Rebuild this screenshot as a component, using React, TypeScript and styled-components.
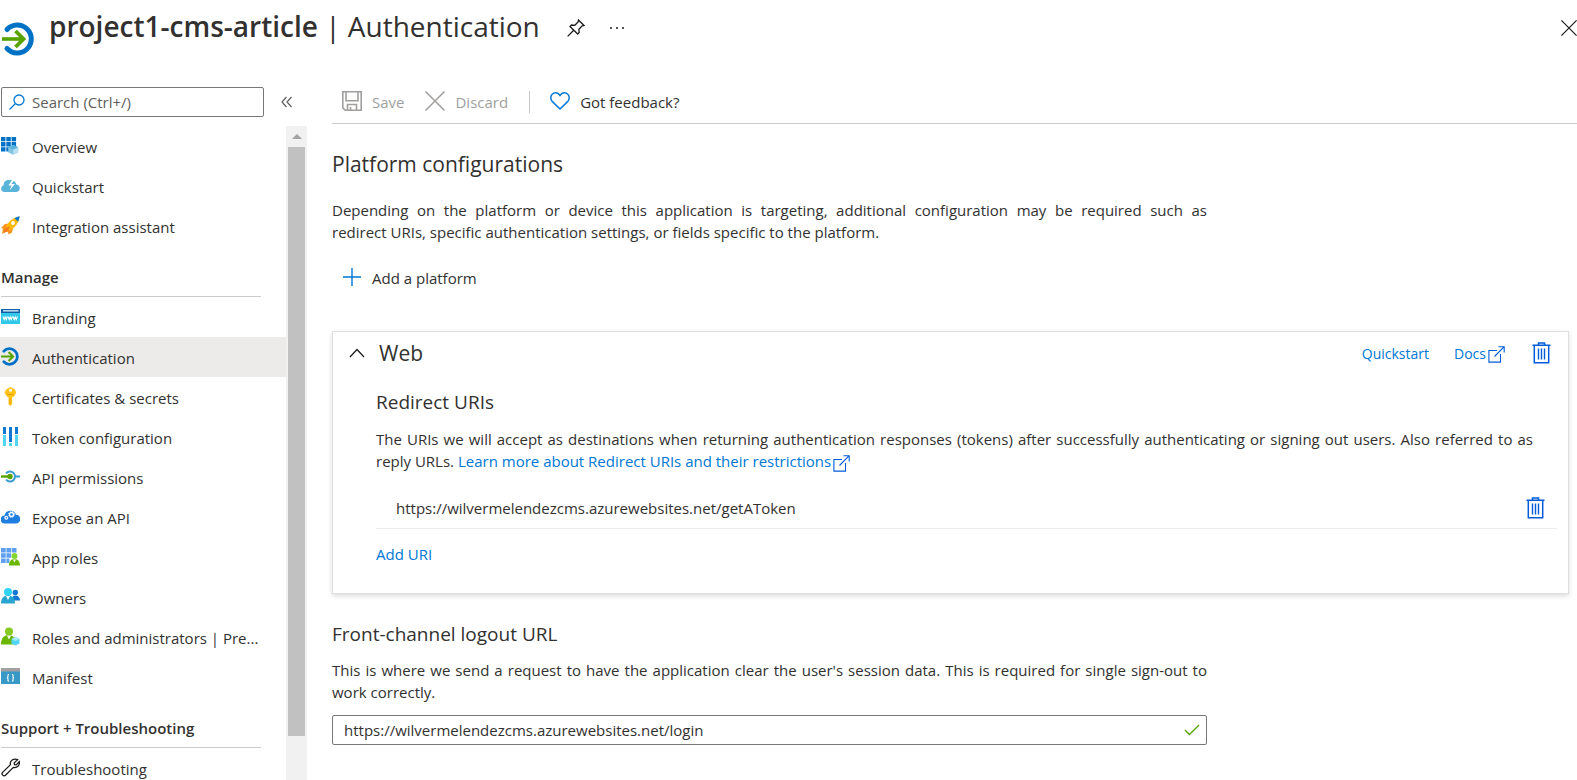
import React from "react";
import styled, { createGlobalStyle, css } from "styled-components";

const color = {
  text: "#323130",
  muted: "#605e5c",
  disabled: "#a19f9d",
  link: "#0078d4",
  trash: "#015cda",
  rule: "#cccccc",
};

const GlobalStyle = createGlobalStyle`
  *, *::before, *::after { box-sizing: border-box; }
  html, body, #root { height: 100%; }
  body {
    margin: 0;
    overflow: hidden;
    background: #fff;
    color: ${color.text};
    font: 400 15px/22px "Open Sans", "Noto Sans", sans-serif;
  }
  h1, h2, h3, p, ul { margin: 0; padding: 0; }
  ul { list-style: none; }
  svg { display: block; flex: none; }
`;

/* ---------- layout ---------- */

const Page = styled.div`
  display: flex;
  flex-direction: column;
  height: 100%;
`;

const Header = styled.header`
  display: flex;
  align-items: flex-start;
  flex: none;
  height: 87px;
  padding-left: 2px;
`;

const Logo = styled.span`
  padding: 22px 13px 0 0;
`;

const Title = styled.h1`
  padding-top: 5px;
  font-size: 28px;
  line-height: 42px;
  font-weight: 400;
  white-space: nowrap;

  strong { font-weight: 600; }
`;

const HeaderActions = styled.div`
  display: flex;
  flex: 1;
  gap: 24px;
  padding: 17px 0 0 27px;
`;

const iconButton = css`
  display: flex;
  align-items: center;
  justify-content: center;
  padding: 0;
  border: 0;
  background: none;
  color: inherit;
  cursor: pointer;
`;

const IconButton = styled.button<{ $push?: boolean; $tone?: string }>`
  ${iconButton}
  height: 22px;
  color: ${(p) => p.$tone ?? "#1b1a19"};
  ${(p) => p.$push && "margin-left: auto;"}
`;

const Body = styled.div`
  display: flex;
  flex: 1;
  min-height: 0;
`;

const Sidebar = styled.aside`
  display: flex;
  flex-direction: column;
  flex: none;
  width: 307px;
`;

const SearchRow = styled.div`
  display: flex;
  align-items: center;
  flex: none;
  gap: 17px;
  height: 30px;
  margin-bottom: 9px;
  padding-left: 1px;
`;

const SearchBox = styled.label`
  display: flex;
  align-items: center;
  gap: 7px;
  width: 263px;
  height: 30px;
  padding: 0 7px;
  border: 1px solid #7a7876;
  border-radius: 2px;
  color: ${color.link};
`;

const TextInput = styled.input`
  flex: 1;
  min-width: 0;
  padding: 0;
  border: 0;
  outline: 0;
  background: none;
  color: ${color.text};
  font: inherit;

  &::placeholder { color: ${color.muted}; opacity: 1; }
`;

const SidebarScroll = styled.div`
  display: flex;
  flex: 1;
  min-height: 0;
`;

const Nav = styled.nav`
  flex: 1;
  min-width: 0;
  overflow: hidden;
`;

const GroupTitle = styled.h2`
  height: 51px;
  margin: 0 25px 0 1px;
  padding-top: 20px;
  border-bottom: 1px solid ${color.rule};
  font-size: 15px;
  line-height: 22px;
  font-weight: 600;
`;

const NavLink = styled.a<{ $selected?: boolean }>`
  display: flex;
  align-items: center;
  gap: 12px;
  height: 40px;
  padding: 2px 24px 0 1px;
  background: ${(p) => (p.$selected ? "#edebe9" : "transparent")};
  color: inherit;
  text-decoration: none;
  white-space: nowrap;

  svg { margin-bottom: 4px; }
`;

const Track = styled.div`
  display: flex;
  flex-direction: column;
  align-items: center;
  width: 21px;
  background: #f1f1f1;
`;

const TrackArrow = styled.span`
  display: flex;
  align-items: center;
  height: 21px;
`;

const Thumb = styled.span`
  width: 17px;
  height: 90%;
  background: #c1c1c1;
`;

/* ---------- main column ---------- */

const Main = styled.main`
  flex: 1;
  min-width: 0;
  padding-left: 25px;
  overflow: hidden;
`;

const Toolbar = styled.div`
  display: flex;
  align-items: center;
  height: 37px;
  padding: 0 0 6px 10px;
  border-bottom: 1px solid ${color.rule};
`;

const Command = styled.button<{ $end?: number }>`
  ${iconButton}
  gap: 10px;
  margin-right: ${(p) => p.$end ?? 0}px;
  color: ${color.text};
  font: inherit;

  &:disabled { color: ${color.disabled}; cursor: default; }

  svg { margin-bottom: 2px; }
`;

const Separator = styled.span`
  width: 1px;
  height: 22px;
  margin-right: 20px;
  background: #c8c6c4;
`;

const SectionTitle = styled.h2`
  padding: 24px 0 19px;
  font-size: 21px;
  line-height: 32px;
  font-weight: 400;
`;

const Paragraph = styled.p`
  max-width: 875px;
  text-align: justify;
`;

const NoWrap = styled.span`
  white-space: nowrap;
`;

const AddPlatform = styled.div`
  display: flex;
  padding: 24px 0 42px 10px;
`;

const Card = styled.section`
  margin-right: 8px;
  padding: 4px 11px 28px 16px;
  border: 1px solid #e1dfdd;
  box-shadow: 0 2px 5px rgba(0, 0, 0, 0.14);
`;

const CardHeader = styled.header`
  display: flex;
  align-items: center;
  height: 34px;
  padding-right: 6px;
`;

const CardTitle = styled.h2`
  flex: 1;
  padding-left: 14px;
  font-size: 21px;
  line-height: 32px;
  font-weight: 400;
`;

const Link = styled.a`
  color: ${color.link};
  text-decoration: none;
`;

const DocsLink = styled(Link)`
  display: flex;
  align-items: center;
  gap: 2px;
  margin: 0 27px 0 25px;
`;

const SmallText = styled.div`
  display: flex;
  padding-top: 2px;
  font-size: 14px;
`;

const CardBody = styled.div`
  padding-left: 27px;
`;

const CardText = styled.p`
  padding-right: 24px;
  text-align: justify;
`;

const SubTitle = styled.h3`
  font-size: 19px;
  line-height: 28px;
  font-weight: 400;
`;

const CardSubTitle = styled(SubTitle)`
  padding: 18px 0 12px;
`;

const InlineIcon = styled.span`
  display: inline-block;
  height: 17px;
  margin-left: 2px;
  vertical-align: -5px;
`;

const UriRow = styled.div`
  display: flex;
  align-items: center;
  justify-content: space-between;
  height: 41px;
  margin-top: 16px;
  padding: 0 12px 0 20px;
  border-bottom: 1px solid #edebe9;
`;

const AddUri = styled.button`
  ${iconButton}
  margin-top: 14px;
  color: ${color.link};
  font: inherit;
`;

const LogoutTitle = styled(SubTitle)`
  padding: 25px 0 10px;
  line-height: 30px;
`;

const UrlField = styled.label`
  display: flex;
  align-items: center;
  max-width: 875px;
  height: 30px;
  margin-top: 12px;
  padding: 0 6px 0 11px;
  border: 1px solid #7a7876;
  border-radius: 2px;
`;

/* ---------- icons ---------- */

const AuthIcon = ({ size = 19 }: { size?: number }) => (
  <svg width={size} height={size} viewBox="0 0 34 34" fill="none">
    <path d="M5 7.500A14 14 0 1 1 5 26.500" stroke="#0072c6" strokeWidth="5" strokeLinecap="round" />
    <path d="M0 17h20" stroke="#57a300" strokeWidth="3.600" />
    <path d="M13.500 9L21.500 17l-8 8" stroke="#57a300" strokeWidth="3.800" />
  </svg>
);

const PinIcon = () => (
  <svg width="18" height="18" viewBox="0 0 18 18" fill="none" stroke="currentColor" strokeWidth="1.3">
    <path d="M11.500 1L17 6.500l-1.800.4-3.300 3.300.3 3.300-1.500 1.500L3 7.500l1.500-1.500 3.300.3 3.300-3.300zM6.500 11.500L.6 17.400" />
  </svg>
);

const DotsIcon = () => (
  <svg width="16" height="4" viewBox="0 0 16 4" fill="currentColor">
    <circle cx="2" cy="2" r="1" />
    <circle cx="8" cy="2" r="1" />
    <circle cx="14" cy="2" r="1" />
  </svg>
);

const CrossIcon = ({ size, weight }: { size: number; weight: number }) => (
  <svg width={size} height={size} viewBox="0 0 20 20" fill="none" stroke="currentColor" strokeWidth={weight}>
    <path d="M.5.5l19 19M19.500.5l-19 19" />
  </svg>
);

const SearchIcon = () => (
  <svg width="16" height="16" viewBox="0 0 16 16" fill="none" stroke="currentColor" strokeWidth="1.3">
    <circle cx="10" cy="6" r="5" />
    <path d="M6.500 9.500L.5 15.500" />
  </svg>
);

const CollapseIcon = () => (
  <svg width="12" height="12" viewBox="0 0 12 12" fill="none" stroke="currentColor" strokeWidth="1.200">
    <path d="M5.500 1L1 6l4.500 5M10.500 1L6 6l4.500 5" />
  </svg>
);

const SaveIcon = () => (
  <svg width="20" height="20" viewBox="0 0 20 20" fill="none" stroke="currentColor" strokeWidth="1.600">
    <path d="M.8.8h18.400v18.400H3.200L.8 16.800zM4 .8v9h12v-9M5.500 19v-5.500h9V19M8.500 16v3" />
  </svg>
);

const HeartIcon = () => (
  <svg width="20" height="18" viewBox="0 0 20 18" fill="none" stroke={color.link} strokeWidth="1.500">
    <path d="M10 17L2.200 9.400C.2 7.300.4 4 2.200 2.200 4.300.2 7.600.4 9.200 2.500L10 3.500l.8-1C12.400.4 15.700.2 17.800 2.200c1.800 1.800 2 5.100 0 7.200z" />
  </svg>
);

const PlusIcon = () => (
  <svg width="20" height="20" viewBox="0 0 20 20" stroke={color.link} strokeWidth="1.400">
    <path d="M10 1v18M1 10h18" />
  </svg>
);

const ChevronUp = () => (
  <svg width="16" height="10" viewBox="0 0 16 10" fill="none" stroke="currentColor" strokeWidth="1.200">
    <path d="M1 9l7-7.500L15 9" />
  </svg>
);

const ExternalIcon = () => (
  <svg width="17" height="17" viewBox="0 0 17 17" fill="none" stroke={color.trash} strokeWidth="1.100">
    <path d="M9 4.500H.9v11.600h11.600V8M10.500.7h5.700v5.700M16.200.7L6.500 10.500" />
  </svg>
);

const TrashIcon = () => (
  <svg width="19" height="22" viewBox="0 0 19 22" fill="none" stroke={color.trash} strokeWidth="1.500">
    <path d="M.5 3.200h18M6.500 3V.9h6V3M2.300 3.500v17.200h14.400V3.500" />
    <path d="M6.500 6.500v11M9.500 6.500v11M12.500 6.500v11" strokeWidth="1.400" />
  </svg>
);

const CheckIcon = () => (
  <svg width="16" height="12" viewBox="0 0 16 12" fill="none" stroke="#57a300" strokeWidth="1.400">
    <path d="M1 6l4.500 4.500L15 1" />
  </svg>
);

const Glyph = ({ children }: { children: React.ReactNode }) => (
  <svg width="19" height="19" viewBox="0 0 19 19" fill="none">
    {children}
  </svg>
);

const OverviewIcon = () => (
  <Glyph>
    <path fill="#0072c6" d="M0 1h4.500v4.300H0zM5.300 1h4.500v4.300H5.300zM10.600 1h4.500v4.300h-4.500zM0 6.100h4.500v4.300H0zM5.300 6.100h4.500v4.300H5.300zM10.600 6.100h4.500v4.300h-4.500zM0 11.200h4.500v4.300H0zM5.300 11.200h4.500v4.300H5.300z" />
    <path fill="#7fc4e0" d="M12.200 9l5 2.300v5l-5 2.500-5-2.500v-5z" />
    <path fill="#b8dff0" d="M12.200 13.500l5-2.200v5l-5 2.500z" />
    <path fill="#59b4d9" d="M12.200 9l5 2.300-5 2.200-5-2.200z" />
  </Glyph>
);

const CloudBoltIcon = () => (
  <Glyph>
    <path fill="#59b4d9" d="M3.500 16A3.500 3.500 0 0 1 2.500 9.200 5 5 0 0 1 8 4a6 6 0 0 1 7.500 4.500A3.800 3.800 0 0 1 15.500 16z" />
    <path fill="#fff" d="M11.500 3L7.500 9.500h3l-2 5 5.500-6.500h-3.500L14 3z" />
  </Glyph>
);

const RocketIcon = () => (
  <Glyph>
    <path fill="#f7931e" d="M1 18l1-5.500-2-.5 4-4 4-.5 4 4-1 5-3.500 2-.5-2.500-2.500.3z" />
    <path fill="#ffb900" d="M5 10.500C8 5 12 1.500 18.500.5 18 7 14 11.500 9 14.500z" />
    <path fill="#0078d4" d="M13.500 2.200C15 1.300 16.700.7 18.700.3c-.2 2-.8 3.700-1.600 5.200z" />
    <circle cx="12" cy="7" r="1.900" fill="#fff" />
    <path stroke="#f2711c" strokeWidth="1.600" d="M3 16l5-5" />
  </Glyph>
);

const BrandingIcon = () => (
  <Glyph>
    <path fill="#32c8ea" d="M0 2h19v15H0z" />
    <path fill="#0f5fa8" d="M0 2h19v4H0z" />
    <path fill="#e8f4fb" d="M2 3.200h15.500v1.300H2z" />
    <path stroke="#fff" strokeWidth="1.100" d="M2 9.500l1.200 3 1-2.500 1 2.500 1.200-3M7 9.500l1.200 3 1-2.500 1 2.500 1.200-3M12 9.500l1.200 3 1-2.500 1 2.500 1.200-3" />
  </Glyph>
);

const KeyIcon = () => (
  <Glyph>
    <path fill="#ffc41a" fillRule="evenodd" d="M9.500 0l4.500 2.500 1.200 3.200-2.300 3.800-1.700.8v7L9.500 19l-2-1.700v-7l-1.700-.8L3.500 5.700 5 2.500zM9.500 1.700a1.500 1.500 0 1 0 0 3 1.500 1.500 0 1 0 0-3z" />
    <path stroke="#e8a200" d="M6 7.500h7M9 11v6" />
  </Glyph>
);

const TokenIcon = () => (
  <Glyph>
    <path fill="#0f78d4" d="M2 0h3v7H2zM8 0h3v15H8zM14 0h3v7h-3z" />
    <path fill="#50d5f5" d="M2 8h3v11H2zM8 16h3v3H8zM14 8h3v11h-3z" />
  </Glyph>
);

const PermissionIcon = () => (
  <Glyph>
    <path stroke="#3a9bcf" strokeWidth="2" d="M5 6.500a5 5 0 1 1 0 6M14.500 9.500H19" />
    <path stroke="#57a300" strokeWidth="2.400" d="M0 9.500h8" />
    <circle cx="9" cy="9.500" r="2.700" fill="#57a300" />
  </Glyph>
);

const CloudGearIcon = () => (
  <Glyph>
    <path fill="#1f7fe0" d="M4 16.500a4 4 0 0 1-.5-8A6 6 0 0 1 15 7.700a4.400 4.400 0 0 1-.2 8.800z" />
    <circle cx="10.500" cy="7.500" r="2" stroke="#fff" strokeWidth="1.300" />
    <circle cx="10.500" cy="7.500" r="3" stroke="#fff" strokeWidth=".8" strokeDasharray="1.200 1.200" />
    <circle cx="5.300" cy="10.800" r="1.400" stroke="#fff" strokeWidth="1.200" />
  </Glyph>
);

const AppRolesIcon = () => (
  <Glyph>
    <path fill="#5ea0ef" d="M0 1h4.700v4.500H0zM5.400 1h4.700v4.500H5.400zM10.800 1h4.700v4.500h-4.700zM0 6.200h4.700v4.500H0zM5.400 6.200h4.700v4.500H5.400zM0 11.400h4.700v4.500H0zM5.400 11.400h3v4.500h-3z" />
    <circle cx="13.500" cy="9" r="3" fill="#86d633" />
    <path fill="#6bb700" d="M8 18.500c0-4 2-6.500 5.500-6.500s5.500 2.500 5.500 6.500z" />
    <path fill="#fff" d="M12 12.500h3l-1.500 3z" />
  </Glyph>
);

const OwnersIcon = () => (
  <Glyph>
    <circle cx="14.300" cy="5.500" r="2.700" fill="#0f78d4" />
    <path fill="#0f78d4" d="M10.500 13.500c0-3 1.300-5 3.800-5 3 0 4.700 2 4.700 5z" />
    <circle cx="7" cy="5" r="4" fill="#32d4f5" />
    <path fill="#28a5cf" d="M0 16.500C0 11.500 2.500 8.500 7 8.500s7 3 7 8z" />
    <path fill="#fff" d="M5 9h4l-2 4z" />
  </Glyph>
);

const AdminIcon = () => (
  <Glyph>
    <circle cx="8" cy="4.500" r="4" fill="#86c91f" />
    <path fill="#6bb700" d="M0 17.500C0 11.500 2.500 8 7.500 8s7.500 3.500 7.500 9.500z" />
    <path fill="#fff" d="M6 8.500h4l-2 4z" />
    <path fill="#50d5f5" d="M14.500 10l4 2v4.500l-4 2-4-2V12z" />
    <path fill="#a5ebfa" d="M14.500 10l4 2-4 2-4-2z" />
  </Glyph>
);

const ManifestIcon = () => (
  <Glyph>
    <path fill="#3999c6" d="M0 1h19v16H0z" />
    <path fill="#a0a1a2" d="M0 1h19v3.500H0z" />
    <path stroke="#fff" strokeWidth="1.100" d="M8 7.500c-1.500 0-1 1-1 2s-.5 1.300-1 1.300c.5 0 1 .3 1 1.300s-.5 2 1 2M11 7.500c1.500 0 1 1 1 2s.5 1.300 1 1.300c-.5 0-1 .3-1 1.300s.5 2-1 2" />
  </Glyph>
);

const WrenchIcon = () => (
  <Glyph>
    <path stroke="#1b1a19" strokeWidth="1.300" d="M16.500 1.700l-3.300 3.200.3 1.700 1.700.3 3.100-3.200c.7 3.800-2.300 6.600-6 5.700l-7.800 7.800c-1.800 1.700-4.600-1-2.900-2.800l7.900-7.800c-1-3.700 3.200-6.700 7-4.900z" />
  </Glyph>
);

/* ---------- content ---------- */

type Item = { label: string; icon: React.ComponentType; selected?: boolean };

const groups: { title?: string; items: Item[] }[] = [
  {
    items: [
      { label: "Overview", icon: OverviewIcon },
      { label: "Quickstart", icon: CloudBoltIcon },
      { label: "Integration assistant", icon: RocketIcon },
    ],
  },
  {
    title: "Manage",
    items: [
      { label: "Branding", icon: BrandingIcon },
      { label: "Authentication", icon: () => <AuthIcon />, selected: true },
      { label: "Certificates & secrets", icon: KeyIcon },
      { label: "Token configuration", icon: TokenIcon },
      { label: "API permissions", icon: PermissionIcon },
      { label: "Expose an API", icon: CloudGearIcon },
      { label: "App roles", icon: AppRolesIcon },
      { label: "Owners", icon: OwnersIcon },
      { label: "Roles and administrators | Pre...", icon: AdminIcon },
      { label: "Manifest", icon: ManifestIcon },
    ],
  },
  {
    title: "Support + Troubleshooting",
    items: [{ label: "Troubleshooting", icon: WrenchIcon }],
  },
];

export default function App() {
  return (
    <Page>
      <GlobalStyle />
      <Header>
        <Logo>
          <AuthIcon size={34} />
        </Logo>
        <Title>
          <strong>project1-cms-article</strong> | Authentication
        </Title>
        <HeaderActions>
          <IconButton aria-label="Pin"><PinIcon /></IconButton>
          <IconButton aria-label="More"><DotsIcon /></IconButton>
          <IconButton aria-label="Close" $push><CrossIcon size={16} weight={1.5} /></IconButton>
        </HeaderActions>
      </Header>

      <Body>
        <Sidebar>
          <SearchRow>
            <SearchBox>
              <SearchIcon />
              <TextInput type="text" aria-label="Search" placeholder="Search (Ctrl+/)" />
            </SearchBox>
            <IconButton aria-label="Collapse menu" $tone="#605e5c"><CollapseIcon /></IconButton>
          </SearchRow>
          <SidebarScroll>
            <Nav>
              {groups.map((group, i) => (
                <div key={i}>
                  {group.title && <GroupTitle>{group.title}</GroupTitle>}
                  <ul>
                    {group.items.map(({ label, icon: Icon, selected }) => (
                      <li key={label}>
                        <NavLink href="#" $selected={selected}>
                          <Icon />
                          {label}
                        </NavLink>
                      </li>
                    ))}
                  </ul>
                </div>
              ))}
            </Nav>
            <Track>
              <TrackArrow>
                <svg width="10" height="5" viewBox="0 0 10 5" fill="#a3a3a3"><path d="M0 5l5-5 5 5z" /></svg>
              </TrackArrow>
              <Thumb />
            </Track>
          </SidebarScroll>
        </Sidebar>

        <Main>
          <Toolbar>
            <Command disabled $end={21}><SaveIcon />Save</Command>
            <Command disabled $end={21}><CrossIcon size={20} weight={1.5} />Discard</Command>
            <Separator />
            <Command><HeartIcon />Got feedback?</Command>
          </Toolbar>

          <SectionTitle>Platform configurations</SectionTitle>
          <Paragraph>
            Depending on the platform or device this application is targeting, additional configuration may be
            required such as <NoWrap>redirect URIs,</NoWrap> specific authentication settings, or fields specific to
            the platform.
          </Paragraph>
          <AddPlatform>
            <Command><PlusIcon />Add a platform</Command>
          </AddPlatform>

          <Card>
            <CardHeader>
              <IconButton aria-label="Collapse Web"><ChevronUp /></IconButton>
              <CardTitle>Web</CardTitle>
              <SmallText>
                <Link href="#">Quickstart</Link>
                <DocsLink href="#">Docs<ExternalIcon /></DocsLink>
              </SmallText>
              <IconButton aria-label="Delete Web"><TrashIcon /></IconButton>
            </CardHeader>
            <CardBody>
              <CardSubTitle>Redirect URIs</CardSubTitle>
              <CardText>
                The URIs we will accept as destinations when returning authentication responses (tokens) after
                successfully authenticating or signing out users. Also referred to as <NoWrap>reply URLs.</NoWrap>{" "}
                <Link href="#">
                  Learn more about Redirect URIs and their restrictions
                  <InlineIcon><ExternalIcon /></InlineIcon>
                </Link>
              </CardText>
              <UriRow>
                <span>https://wilvermelendezcms.azurewebsites.net/getAToken</span>
                <IconButton aria-label="Delete URI"><TrashIcon /></IconButton>
              </UriRow>
              <AddUri>Add URI</AddUri>
            </CardBody>
          </Card>

          <LogoutTitle>Front-channel logout URL</LogoutTitle>
          <Paragraph>
            This is where we send a request to have the application clear the user's session data. This is required
            for single sign-out to work correctly.
          </Paragraph>
          <UrlField>
            <TextInput
              type="text"
              aria-label="Front-channel logout URL"
              defaultValue="https://wilvermelendezcms.azurewebsites.net/login"
            />
            <CheckIcon />
          </UrlField>
        </Main>
      </Body>
    </Page>
  );
}
